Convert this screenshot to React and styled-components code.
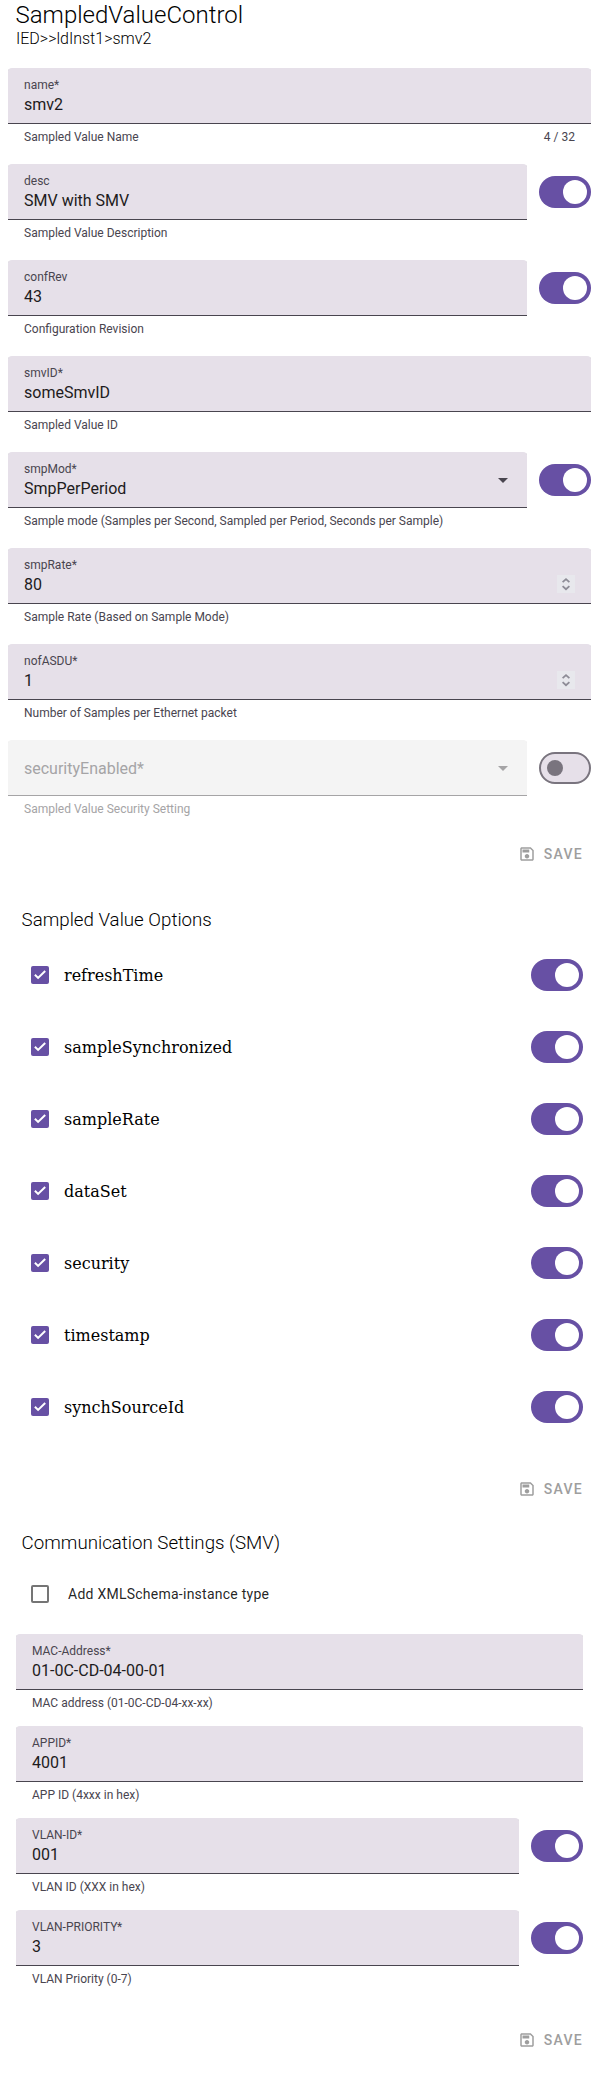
import React from "react";
import styled, { createGlobalStyle } from "styled-components";

const GlobalStyle = createGlobalStyle`
  *, *::before, *::after { box-sizing: border-box; }
  body { margin: 0; background: #fff; font-family: Roboto, sans-serif; }
`;

const Page = styled.main`
  display: flex;
  flex-direction: column;
  width: 100%;
  height: 2074px;
  overflow: hidden;
`;

const Title = styled.h2`
  margin: 0;
  padding: 1px 15.5px 0;
  height: 68px;
  font-size: 24px;
  font-weight: 300;
  line-height: 28px;
  color: #000;
`;

const Path = styled.div`
  padding-left: 0.5px;
  font-size: 16px;
  line-height: 19px;
`;

const Fields = styled.section`
  display: flex;
  flex-direction: column;
  gap: ${(p) => p.$gap}px;
  padding: 0 ${(p) => p.$inset}px;
`;

const FieldRow = styled.div`
  display: flex;
  align-items: flex-start;
  gap: 12px;
`;

const FieldColumn = styled.div`
  flex: 1;
  min-width: 0;
`;

const FieldBox = styled.div`
  display: flex;
  align-items: center;
  height: 56px;
  padding: 0 16px;
  border-radius: 4px 4px 0 0;
  background: ${(p) => (p.$disabled ? "#f4f4f4" : "#e6e0e9")};
  box-shadow: inset 0 -1px 0 ${(p) => (p.$disabled ? "#a5a4a6" : "#49454f")};
`;

const FieldText = styled.div`
  flex: 1;
  display: flex;
  flex-direction: column;
  padding-top: 2px;
`;

const FieldLabel = styled.span`
  font-size: 12px;
  line-height: 16px;
  color: #49454f;
`;

const FieldValue = styled.span`
  font-size: 16px;
  line-height: 24px;
  color: ${(p) => (p.$disabled ? "#a5a4a6" : "#1d1b20")};
`;

const Support = styled.div`
  display: flex;
  justify-content: space-between;
  height: 20px;
  padding: 5px 16px 0;
  font-size: 12px;
  line-height: 16px;
  color: ${(p) => (p.$disabled ? "#a5a4a6" : "#49454f")};
`;

const SelectArrow = styled.svg`
  width: 24px;
  height: 24px;
  margin-right: -4px;
  fill: ${(p) => (p.$disabled ? "#a5a4a6" : "#49454f")};
`;

const Stepper = styled.svg`
  width: 18px;
  height: 18px;
  margin-top: 16px;
  background: #e8e8ed;
  fill: none;
  stroke: #8d8b96;
  stroke-width: 1.8;
`;

const Track = styled.span`
  flex: none;
  display: flex;
  align-items: center;
  justify-content: ${(p) => (p.$on ? "flex-end" : "flex-start")};
  width: 52px;
  height: 32px;
  padding: ${(p) => (p.$on ? "0 4px" : "0 6px")};
  margin-top: ${(p) => (p.$offset ? 12 : 0)}px;
  border-radius: 16px;
  border: ${(p) => (p.$on ? "0" : "2px solid #79747e")};
  background: ${(p) => (p.$on ? "#6750a4" : "#e6e0e9")};
`;

const Handle = styled.span`
  width: ${(p) => (p.$on ? 24 : 16)}px;
  height: ${(p) => (p.$on ? 24 : 16)}px;
  border-radius: 50%;
  background: ${(p) => (p.$on ? "#fff" : "#79747e")};
`;

const SaveButton = styled.div`
  align-self: flex-end;
  display: flex;
  align-items: center;
  gap: 8px;
  height: 36px;
  margin: ${(p) => p.$top}px 8px 0 0;
  padding: 0 8px;
  font-size: 14px;
  font-weight: 500;
  letter-spacing: 1.25px;
  color: #9e9e9e;
  svg { width: 18px; height: 18px; fill: currentColor; }
`;

const SectionTitle = styled.h3`
  margin: ${(p) => p.$top}px 0 0;
  padding: 0 21.6px;
  height: 22px;
  font-size: 18.72px;
  font-weight: 300;
  line-height: 22px;
  color: #000;
`;

const Options = styled.section`
  display: flex;
  flex-direction: column;
  gap: 40px;
  padding: 28px 16px 0 31px;
`;

const OptionRow = styled.div`
  display: flex;
  align-items: center;
  height: 32px;
`;

const OptionLabel = styled.span`
  flex: 1;
  margin-left: 15px;
  padding-top: 2px;
  font-family: "DejaVu Serif", serif;
  font-size: 16px;
  line-height: 20px;
  color: #000;
`;

const SchemaRow = styled.div`
  display: flex;
  align-items: center;
  gap: 19px;
  height: 40px;
  margin: 20px 0 20px 31px;
`;

const SchemaLabel = styled.span`
  font-size: 14px;
  line-height: 20px;
  letter-spacing: 0.25px;
  color: rgba(0, 0, 0, 0.87);
`;

const Box = styled.span`
  flex: none;
  display: flex;
  width: 18px;
  height: 18px;
  border-radius: 2px;
  border: ${(p) => (p.$checked ? "0" : "2px solid #757575")};
  background: ${(p) => (p.$checked ? "#6750a4" : "transparent")};
  svg { width: 18px; height: 18px; fill: none; stroke: #fff; stroke-width: 2; }
`;

function Toggle({ on, offset }) {
  return (
    <Track $on={on} $offset={offset}>
      <Handle $on={on} />
    </Track>
  );
}

function Checkbox({ checked }) {
  return (
    <Box $checked={checked}>
      {checked && (
        <svg viewBox="0 0 18 18">
          <path d="M3.9 8.7 7.1 11.9 14.2 5" />
        </svg>
      )}
    </Box>
  );
}

function Save({ top }) {
  return (
    <SaveButton $top={top}>
      <svg viewBox="0 0 24 24">
        <path d="M17 3H5c-1.11 0-2 .9-2 2v14c0 1.1.89 2 2 2h14c1.1 0 2-.9 2-2V7l-4-4zm2 16H5V5h11.17L19 7.83V19zm-7-7c-1.66 0-3 1.34-3 3s1.34 3 3 3 3-1.34 3-3-1.34-3-3-3zM6 6h9v4H6z" />
      </svg>
      <span>SAVE</span>
    </SaveButton>
  );
}

function Field({ label, value, support, counter, toggle, kind, disabled }) {
  return (
    <FieldRow>
      <FieldColumn>
        <FieldBox $disabled={disabled}>
          <FieldText>
            {disabled ? (
              <FieldValue $disabled>{label}</FieldValue>
            ) : (
              <>
                <FieldLabel>{label}</FieldLabel>
                <FieldValue>{value}</FieldValue>
              </>
            )}
          </FieldText>
          {kind === "select" && (
            <SelectArrow $disabled={disabled} viewBox="0 0 24 24">
              <path d="M7 10l5 5 5-5z" />
            </SelectArrow>
          )}
          {kind === "number" && (
            <Stepper viewBox="0 0 18 18">
              <path d="M5.6 7.1 9 4.1l3.4 3M5.6 11.2 9 14.2l3.4-3" />
            </Stepper>
          )}
        </FieldBox>
        <Support $disabled={disabled}>
          <span>{support}</span>
          {counter && <span>{counter}</span>}
        </Support>
      </FieldColumn>
      {toggle && <Toggle on={toggle === "on"} offset />}
    </FieldRow>
  );
}

const controlFields = [
  { label: "name*", value: "smv2", support: "Sampled Value Name", counter: "4 / 32" },
  { label: "desc", value: "SMV with SMV", support: "Sampled Value Description", toggle: "on" },
  { label: "confRev", value: "43", support: "Configuration Revision", toggle: "on" },
  { label: "smvID*", value: "someSmvID", support: "Sampled Value ID" },
  {
    label: "smpMod*",
    value: "SmpPerPeriod",
    support: "Sample mode (Samples per Second, Sampled per Period, Seconds per Sample)",
    kind: "select",
    toggle: "on",
  },
  { label: "smpRate*", value: "80", support: "Sample Rate (Based on Sample Mode)", kind: "number" },
  { label: "nofASDU*", value: "1", support: "Number of Samples per Ethernet packet", kind: "number" },
  {
    label: "securityEnabled*",
    support: "Sampled Value Security Setting",
    kind: "select",
    toggle: "off",
    disabled: true,
  },
];

const options = [
  "refreshTime",
  "sampleSynchronized",
  "sampleRate",
  "dataSet",
  "security",
  "timestamp",
  "synchSourceId",
];

const addressFields = [
  { label: "MAC-Address*", value: "01-0C-CD-04-00-01", support: "MAC address (01-0C-CD-04-xx-xx)" },
  { label: "APPID*", value: "4001", support: "APP ID (4xxx in hex)" },
  { label: "VLAN-ID*", value: "001", support: "VLAN ID (XXX in hex)", toggle: "on" },
  { label: "VLAN-PRIORITY*", value: "3", support: "VLAN Priority (0-7)", toggle: "on" },
];

export default function App() {
  return (
    <>
      <GlobalStyle />
      <Page>
        <Title>
          SampledValueControl
          <Path>IED&gt;&gt;ldInst1&gt;smv2</Path>
        </Title>
        <Fields $gap={20} $inset={8}>
          {controlFields.map((f) => (
            <Field key={f.label} {...f} />
          ))}
        </Fields>
        <Save top={20} />

        <SectionTitle $top={37}>Sampled Value Options</SectionTitle>
        <Options>
          {options.map((name) => (
            <OptionRow key={name}>
              <Checkbox checked />
              <OptionLabel>{name}</OptionLabel>
              <Toggle on />
            </OptionRow>
          ))}
        </Options>
        <Save top={48} />

        <SectionTitle $top={25}>Communication Settings (SMV)</SectionTitle>
        <SchemaRow>
          <Checkbox />
          <SchemaLabel>Add XMLSchema-instance type</SchemaLabel>
        </SchemaRow>
        <Fields $gap={16} $inset={16}>
          {addressFields.map((f) => (
            <Field key={f.label} {...f} />
          ))}
        </Fields>
        <Save top={36} />
      </Page>
    </>
  );
}
